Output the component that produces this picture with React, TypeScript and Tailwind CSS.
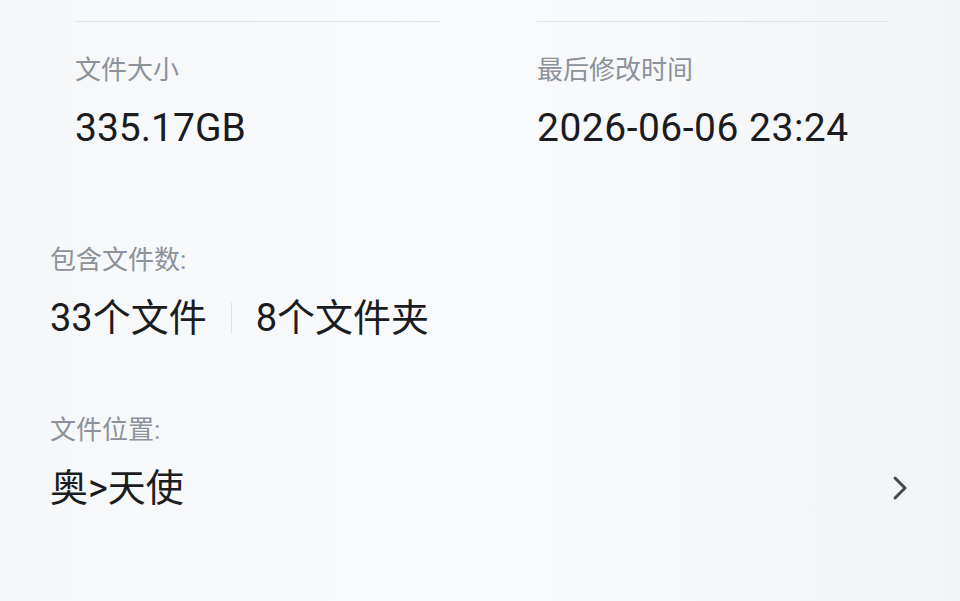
import { ChevronRight } from "lucide-react";

const font = {
  fontFamily: 'Roboto, "Noto Sans CJK SC", sans-serif',
};

function Label({ children }: { children: React.ReactNode }) {
  return (
    <div className="text-[26px] leading-[36px] text-[#8d9199]">{children}</div>
  );
}

function Value({ children }: { children: React.ReactNode }) {
  return (
    <div className="mt-4 text-[39px] leading-[48px] text-[#1b1c1f]">
      {children}
    </div>
  );
}

export default function App() {
  return (
    <div
      className="h-[601px] w-[960px] overflow-hidden bg-gradient-to-r from-[#f6f7f9] via-[#f9fafc] to-[#f3f4f6]"
      style={font}
    >
      {/* top info card */}
      <div className="pt-[21px] pl-[75px]">
        <div className="grid grid-cols-[365px_351px] gap-x-[97px]">
          <div>
            <div className="h-px bg-[#e1e3e7]" />
            <div className="mt-[30px]">
              <Label>文件大小</Label>
              <Value>335.17GB</Value>
            </div>
          </div>
          <div>
            <div className="h-px bg-[#e1e3e7]" />
            <div className="mt-[30px]">
              <Label>最后修改时间</Label>
              <div className="mt-4 text-[39px] leading-[48px] tracking-[0.5px] text-[#1b1c1f]">
                2026-06-06 23:24
              </div>
            </div>
          </div>
        </div>
      </div>

      {/* details */}
      <div className="mt-[90px] pl-[50px] pr-[40px]">
        <Label>包含文件数:</Label>
        <div className="mt-4 flex items-center text-[38px] leading-[48px] text-[#1b1c1f]">
          <span>33个文件</span>
          <span className="mx-[24px] h-[32px] w-px bg-[#e1e3e7]" />
          <span>8个文件夹</span>
        </div>

        <div className="mt-[70px]">
          <Label>文件位置:</Label>
          <div className="mt-4 flex items-center justify-between">
            <span className="text-[38px] leading-[48px] text-[#1b1c1f]">
              奥&gt;天使
            </span>
            <ChevronRight
              className="h-[40px] w-[40px] text-[#45484d]"
              strokeWidth={1.8}
            />
          </div>
        </div>
      </div>
    </div>
  );
}
